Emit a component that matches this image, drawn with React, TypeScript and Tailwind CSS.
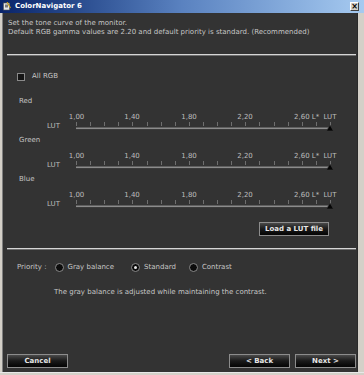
import React from "react";

const FONT = { fontFamily: '"DejaVu Sans", Verdana, sans-serif' };

function Separator({ mt }: { mt: string }) {
  return (
    <div className={`${mt} ml-[4px] mr-[1px] h-[2px] border-t border-[#d6d6d6] border-b border-b-[#6e6e6e]`} />
  );
}

const TICKS = Array.from({ length: 19 }, (_, i) => 73 + i * 14.11);

function Slider({ label }: { label: string }) {
  return (
    <div>
      <div className="pl-[16px] h-[9px] leading-[9px] text-[7px] text-[#c4c4c4]">{label}</div>
      <div className="relative h-[30px]">
        <span className="absolute left-[44px] top-[16px] leading-[8px] text-[7px] text-[#bdbdbd]">LUT</span>
        {[
          { x: 73.5, t: "1,00" },
          { x: 129, t: "1,40" },
          { x: 186, t: "1,80" },
          { x: 242, t: "2,20" },
        ].map((l) => (
          <span
            key={l.t}
            className="absolute top-[7px] leading-[8px] text-[7px] text-[#bdbdbd] -translate-x-1/2"
            style={{ left: l.x }}
          >
            {l.t}
          </span>
        ))}
        <span className="absolute left-[291px] top-[7px] leading-[8px] text-[7px] text-[#bdbdbd]">2,60 L*</span>
        <span className="absolute left-[327px] top-[7px] leading-[8px] text-[7px] text-[#bdbdbd] -translate-x-1/2">LUT</span>
        <svg className="absolute left-0 top-0" width="354" height="30">
          {TICKS.map((x, i) => (
            <line key={i} x1={Math.round(x) + 0.5} x2={Math.round(x) + 0.5} y1={16} y2={20} stroke="#6f6f6f" strokeWidth={1} />
          ))}
          <rect x={73} y={21.5} width={254} height={1.6} fill="#8c8c8c" />
          <polygon points="323.5,25 330.5,25 327,19" fill="#050505" stroke="#3a3a3a" strokeWidth={0.6} />
        </svg>
      </div>
    </div>
  );
}

function Btn({ children, w }: { children: React.ReactNode; w: string }) {
  return (
    <div
      className={`${w} h-[14px] flex items-center justify-center border border-[#8c8c8c] bg-gradient-to-b from-[#4a4a4a] via-[#1a1a1a] to-[#050505] text-[7px] font-bold text-[#e6e6e6] leading-[8px]`}
    >
      {children}
    </div>
  );
}

function Radio({ checked }: { checked?: boolean }) {
  return (
    <div className="w-[9px] h-[9px] rounded-full bg-[#0c0c0c] border border-[#8a8a8a] flex items-center justify-center">
      {checked && <div className="w-[3px] h-[3px] rounded-full bg-[#e8e8e8]" />}
    </div>
  );
}

export default function App() {
  return (
    <div className="w-[364px] h-[375px] bg-[#d4d0c8] flex flex-col overflow-hidden" style={FONT}>
      {/* title bar */}
      <div className="h-[13px] flex items-center bg-gradient-to-r from-[#0a246a] via-[#5a82c0] to-[#a6caf0] pl-[3px] pr-[5px]">
        <svg width="8" height="9" viewBox="0 0 8 9">
          <rect x="0.5" y="1" width="6" height="7" fill="#e8e8e8" stroke="#555" strokeWidth="0.6" />
          <rect x="2" y="2.5" width="3" height="3" fill="#7a7a7a" />
          <line x1="4" y1="0" x2="7.5" y2="6" stroke="#c8a020" strokeWidth="1.2" />
        </svg>
        <span className="ml-[4px] text-[7px] font-bold text-white leading-[9px]">ColorNavigator 6</span>
        <div className="ml-auto w-[9px] h-[9px] bg-[#d4d0c8] border border-t-white border-l-white border-r-[#404040] border-b-[#404040] flex items-center justify-center text-[8px] leading-[8px] font-bold text-black">
          ×
        </div>
      </div>
      <div className="flex-1 flex">
        <div className="w-[3px] bg-[#d4d0c8] border-r border-[#808080]" />
        <div className="flex-1 bg-[#333333] flex flex-col">
          <div className="pt-[6px] pl-[5px] text-[7px] leading-[9px] text-[#c6c6c6]">
            <div>Set the tone curve of the monitor.</div>
            <div>Default RGB gamma values are 2.20 and default priority is standard. (Recommended)</div>
          </div>
          <Separator mt="mt-[17px]" />
          <div className="mt-[16px] pl-[14px] h-[9px] flex items-center">
            <div className="w-[8px] h-[8px] bg-[#141414] border border-[#8a8a8a]" />
            <span className="ml-[7px] text-[7px] leading-[9px] text-[#c6c6c6]">All RGB</span>
          </div>
          <div className="mt-[16px]">
            <Slider label="Red" />
            <Slider label="Green" />
            <Slider label="Blue" />
          </div>
          <div className="mt-[8px] self-end mr-[28px]">
            <Btn w="w-[70px]">Load a LUT file</Btn>
          </div>
          <Separator mt="mt-[12px]" />
          <div className="mt-[13px] h-[9px] pl-[14px] flex items-center text-[7px] leading-[9px] text-[#c6c6c6]">
            <span>Priority :</span>
            <div className="ml-[8px]"><Radio /></div>
            <span className="ml-[4px]">Gray balance</span>
            <div className="ml-[17px]"><Radio checked /></div>
            <span className="ml-[4px]">Standard</span>
            <div className="ml-[13px]"><Radio /></div>
            <span className="ml-[4px]">Contrast</span>
          </div>
          <div className="mt-[16px] pl-[51px] text-[7px] leading-[9px] text-[#c6c6c6]">
            The gray balance is adjusted while maintaining the contrast.
          </div>
          <div className="mt-auto pb-[4px] pl-[4px] pr-[1px] flex">
            <Btn w="w-[61px]">Cancel</Btn>
            <div className="ml-auto flex gap-[5px]">
              <Btn w="w-[61px]">&lt; Back</Btn>
              <Btn w="w-[61px]">Next &gt;</Btn>
            </div>
          </div>
        </div>
        <div className="w-[7px] bg-[#d4d0c8] border-l border-[#2a2a2a]" />
      </div>
      <div className="h-[3px] bg-[#d4d0c8] border-t border-[#e8e8e8]" />
    </div>
  );
}
